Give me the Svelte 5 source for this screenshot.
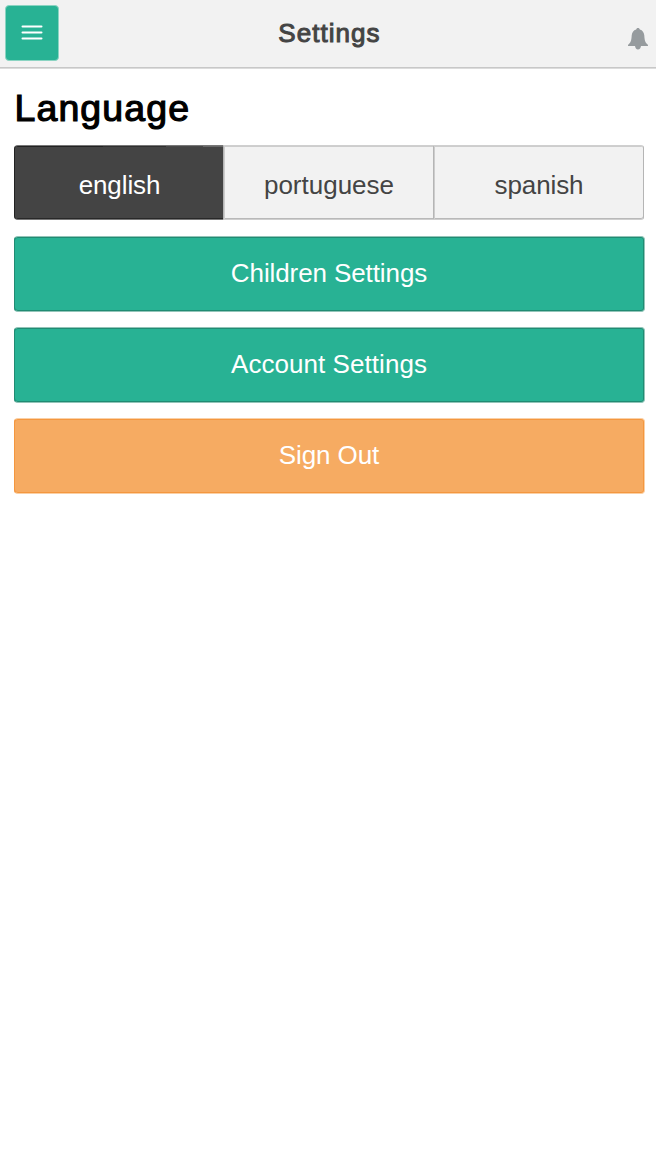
<script>
  const languages = ['english', 'portuguese', 'spanish'];
  let selected = $state('english');
</script>

<header>
  <button class="menu" aria-label="Menu">
    <svg width="22" height="18" viewBox="0 0 22 18">
      <path d="M1.500 2.500H20.500M1.500 8.500H20.500M1.500 14.500H20.500" stroke="#fff" stroke-width="2" stroke-linecap="round" />
    </svg>
  </button>
  <h1>Settings</h1>
  <svg class="bell" width="22" height="24" viewBox="0 0 22 24">
    <path fill="#969b9e" d="M11 .9c1 0 1.7.7 1.8 1.6 2.8.8 4.3 3 4.5 6 .3 5.200 1 7.200 3.300 8.900.6.5.6 1.600-.2 1.600H14c-.2 2-1.300 3.400-3 3.400S8.200 21 8 19H1.600c-.8 0-.8-1.100-.2-1.600 2.300-1.700 3-3.700 3.300-8.900.2-3 1.700-5.200 4.500-6C9.300 1.600 10 .9 11 .9Z" />
  </svg>
</header>

<main>
  <h2>Language</h2>
  <div class="segments">
    {#each languages as language}
      <button class:active={selected === language} onclick={() => (selected = language)}>{language}</button>
    {/each}
  </div>
  <button class="action">Children Settings</button>
  <button class="action account">Account Settings</button>
  <button class="action signout">Sign Out</button>
</main>

<style>
  :global(body) {
    background: #fff;
    font-family: "Liberation Sans", Arial, sans-serif;
  }
  button {
    box-sizing: border-box;
    margin: 0;
    padding: 0;
    font: inherit;
  }
  header {
    box-sizing: border-box;
    height: 69px;
    display: grid;
    grid-template-columns: 60px 1fr 58px;
    background: #f2f2f2;
    border-bottom: 1px solid #dcdcdc;
    box-shadow: inset 0 -1px #c8c8c8;
  }
  .menu {
    width: 54px;
    height: 56px;
    margin: 5px 0 0 5px;
    display: flex;
    align-items: center;
    justify-content: center;
    border: 1px solid #8bd4c2;
    border-radius: 4px;
    background: #28b294;
  }
  .menu svg { margin-top: -1px; }
  h1 {
    margin: 0;
    padding-left: 1px;
    text-align: center;
    color: #444;
    font-size: 26px;
    font-weight: 400;
    line-height: 67px;
    letter-spacing: 1.05px;
    -webkit-text-stroke: 1px #444;
  }
  .bell { margin: 27px 0 0 29px; }
  main {
    padding: 0 11px 0 14px;
    display: flex;
    flex-direction: column;
  }
  h2 {
    margin: 19px 0 12px;
    height: 45px;
    color: #000;
    font-size: 37.500px;
    font-weight: 400;
    line-height: 41px;
    letter-spacing: 1.1px;
    text-indent: 0.5px;
    -webkit-text-stroke: 1.2px #000;
  }
  .segments {
    height: 75px;
    width: 630px;
    display: grid;
    grid-template-columns: 209px 210px 211px;
  }
  .segments button {
    height: 75px;
    border: 1px solid #cfcfcf;
    border-left-color: #b5b5b5;
    border-right-width: 0;
    background: #f2f2f2;
    box-shadow: inset 1px 1px #cdcdcd, inset 0 -1px #b9b9b9;
    color: #444;
    font-size: 26px;
    line-height: 68px;
    padding: 5px 0 0 1px;
  }
  .segments button:first-child { border-radius: 4px 0 0 4px; }
  .segments button:last-child {
    border-right: 1px solid #b5b5b5;
    border-radius: 0 3px 3px 0;
    letter-spacing: -0.1px;
  }
  .segments button.active {
    border-color: #777 #222 #777 #222;
    background:
      linear-gradient(90deg, #222 0 88px, #303030 88px 151px, #484848 151px 188px, #686868 188px) top / 100% 1px no-repeat,
      linear-gradient(#282828, #282828) bottom / 100% 1px no-repeat,
      #444;
    box-shadow: none;
    color: #fff;
    letter-spacing: -0.1px;
  }
  .action {
    height: 76px;
    margin-top: 15px;
    border: 1px solid #93c5b9;
    border-left-color: #218b73;
    border-radius: 4px;
    background: #28b294;
    box-shadow: inset 0 1px #218b73, inset 0 -1px #218b73, inset -1px 0 #218b73;
    color: #fff;
    font-size: 26px;
    letter-spacing: -0.1px;
    line-height: 70px;
    padding: 0 1px 2px 0;
  }
  .segments + .action { margin-top: 16px; }
  .account { letter-spacing: 0.05px; }
  .signout {
    background: #f6ab62;
    border-color: #fad0a6;
    border-left-color: #f4973f;
    box-shadow: inset 0 1px #f4973f, inset 0 -1px #f4973f, inset -1px 0 #f4973f;
  }
</style>
